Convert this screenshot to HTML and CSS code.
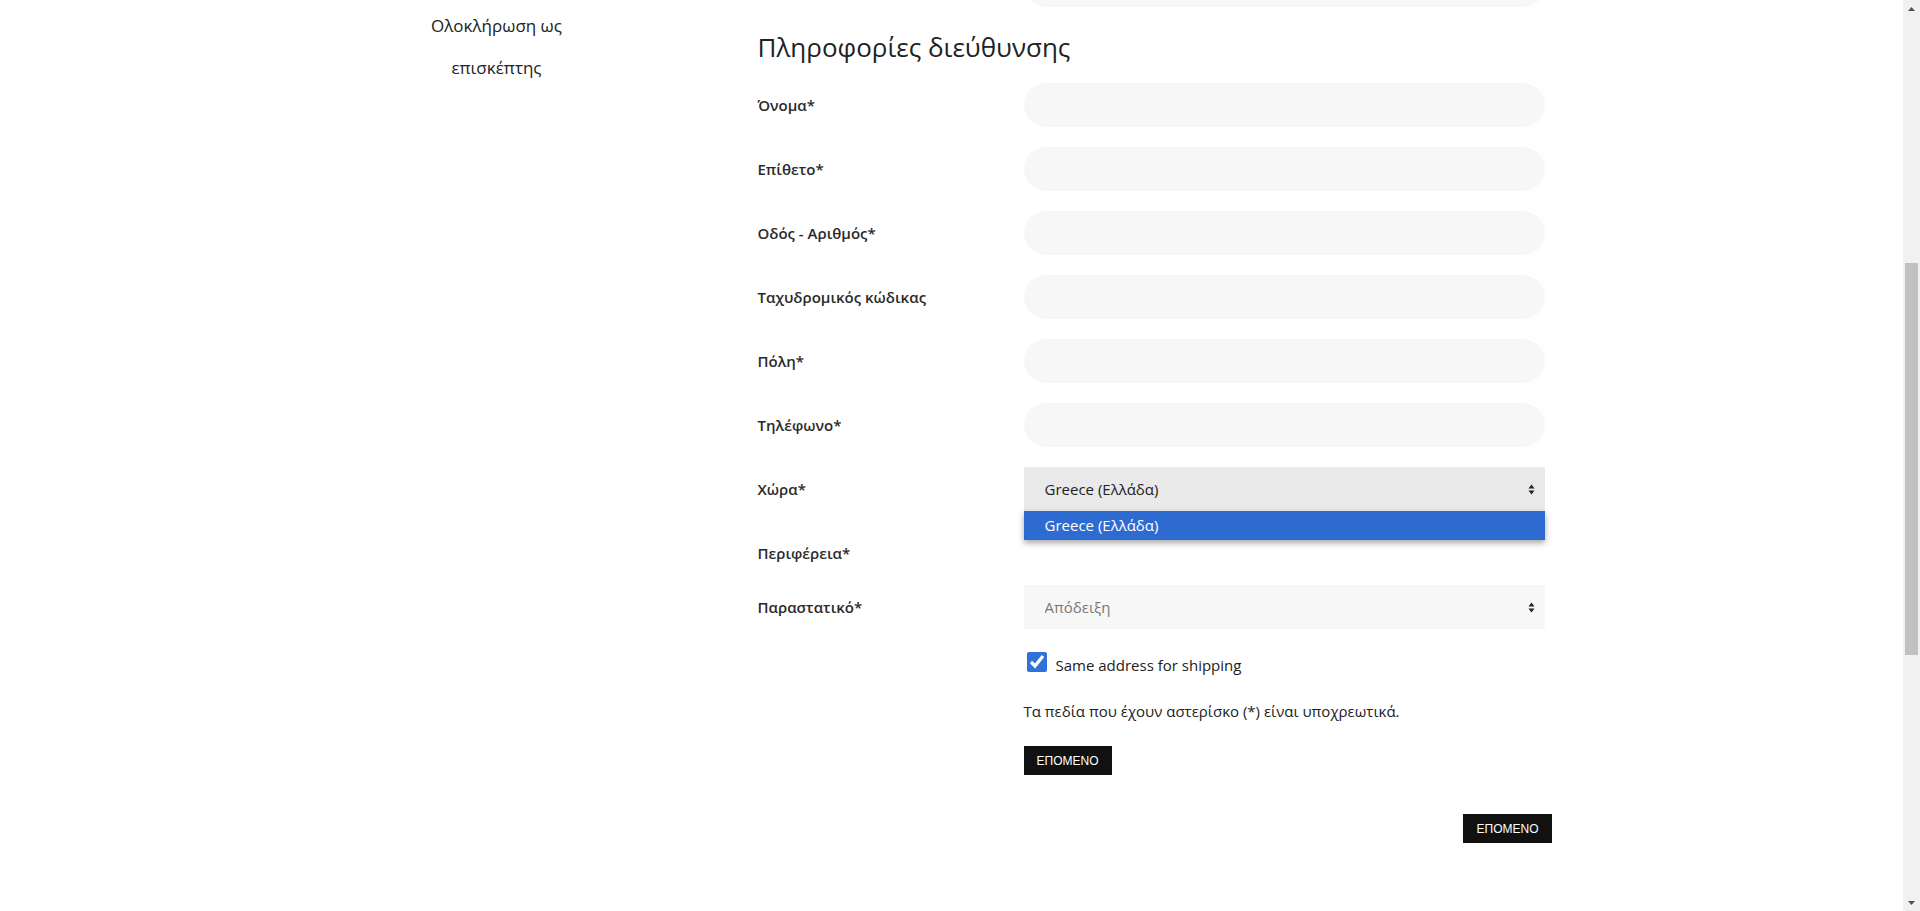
FILE: index.html
```html
<!DOCTYPE html>
<html lang="el">
<head>
    <meta charset="UTF-8">
    <meta name="viewport" content="width=device-width, initial-scale=1.0">
    <title>Ολοκλήρωση παραγγελίας</title>
    <link rel="stylesheet" href="styles.css">
</head>
<body>
    <div class="checkout">
        <aside class="sidebar">
            <a href="#" class="side-link">Ολοκλήρωση ως επισκέπτης</a>
        </aside>

        <main class="main">
            <form id="checkoutForm">
                <!-- tail of the contact section -->
                <div class="form-row form-row-cut">
                    <span class="label-spacer"></span>
                    <div class="field"><input type="email" name="email"></div>
                </div>

                <section class="form-section">
                    <h2>Πληροφορίες διεύθυνσης</h2>
                    <div class="form-row">
                        <label for="firstName">Όνομα*</label>
                        <div class="field"><input type="text" id="firstName" name="first_name"></div>
                    </div>
                    <div class="form-row">
                        <label for="lastName">Επίθετο*</label>
                        <div class="field"><input type="text" id="lastName" name="last_name"></div>
                    </div>
                    <div class="form-row">
                        <label for="street">Οδός - Αριθμός*</label>
                        <div class="field"><input type="text" id="street" name="street"></div>
                    </div>
                    <div class="form-row">
                        <label for="postcode">Ταχυδρομικός κώδικας</label>
                        <div class="field"><input type="text" id="postcode" name="postcode"></div>
                    </div>
                    <div class="form-row">
                        <label for="city">Πόλη*</label>
                        <div class="field"><input type="text" id="city" name="city"></div>
                    </div>
                    <div class="form-row">
                        <label for="phone">Τηλέφωνο*</label>
                        <div class="field"><input type="text" id="phone" name="phone"></div>
                    </div>
                    <div class="form-row">
                        <label for="country">Χώρα*</label>
                        <div class="field">
                            <select id="country" name="country" class="is-open">
                                <option value="GR">Greece (Ελλάδα)</option>
                            </select>
                            <!-- open option list of the country select -->
                            <ul class="select-menu">
                                <li class="selected">Greece (Ελλάδα)</li>
                            </ul>
                        </div>
                    </div>
                    <div class="form-row form-row-short">
                        <label for="region">Περιφέρεια*</label>
                    </div>
                    <div class="form-row">
                        <label for="invoiceType">Παραστατικό*</label>
                        <div class="field">
                            <select id="invoiceType" name="invoice_type" class="muted">
                                <option value="receipt">Απόδειξη</option>
                                <option value="invoice">Τιμολόγιο</option>
                            </select>
                        </div>
                    </div>

                    <div class="form-extra">
                        <label class="check-row">
                            <input type="checkbox" name="same_shipping" checked>
                            <span>Same address for shipping</span>
                        </label>
                        <p class="note">Τα πεδία που έχουν αστερίσκο (*) είναι υποχρεωτικά.</p>
                        <button type="submit" class="btn">Επομενο</button>
                    </div>
                </section>
            </form>

            <div class="checkout-actions">
                <button type="button" class="btn">Επομενο</button>
            </div>
        </main>
    </div>

    <!-- window scrollbar -->
    <div class="scrollbar" aria-hidden="true">
        <span class="scroll-btn">
            <svg width="7" height="4" viewBox="0 0 7 4"><polygon points="0,4 3.5,0 7,4" fill="#505050"/></svg>
        </span>
        <span class="scroll-track"><span class="scroll-thumb"></span></span>
        <span class="scroll-btn">
            <svg width="7" height="4" viewBox="0 0 7 4"><polygon points="0,0 3.5,4 7,0" fill="#505050"/></svg>
        </span>
    </div>
</body>
</html>
```

FILE: styles.css
```css
:root {
    --text-color: #222;
    --field-bg: #f7f7f7;
    --field-open: #e9e9e9;
    --highlight: #2e6bd1;
}

* {
    box-sizing: border-box;
}

body {
    margin: 0;
    padding-right: 17px;
    font-family: 'Open Sans', 'Noto Sans', sans-serif;
    font-size: 15px;
    color: var(--text-color);
    background: #fff;
}

.checkout {
    display: flex;
    width: 1200px;
    margin: 0 auto;
    padding-bottom: 60px;
}

.sidebar {
    width: 290px;
    flex-shrink: 0;
    padding: 5px 50px 0;
    text-align: center;
}

.side-link {
    display: block;
    font-size: 17px;
    line-height: 42px;
    color: var(--text-color);
    text-decoration: none;
}

.main {
    flex: 1;
    padding-left: 116px;
}

#checkoutForm {
    width: 787px;
}

.form-section h2 {
    margin: 23px 0 19px;
    font-size: 26px;
    line-height: 34px;
    font-weight: 400;
    color: #222;
}

.form-row {
    display: flex;
    margin-bottom: 20px;
}

.form-row label,
.label-spacer {
    width: 266px;
    flex-shrink: 0;
}

.form-row label {
    padding-top: 12px;
    font-size: 15px;
    line-height: 20px;
    font-weight: 600;
    color: #2a2a2a;
}

/* only the bottom edge of this field is left on screen */
.form-row-cut {
    height: 7px;
    margin-bottom: 0;
    overflow: hidden;
    align-items: flex-end;
}

.form-row-cut .field {
    flex-shrink: 0;
}

.form-row-short {
    height: 34px;
}

.field {
    position: relative;
    flex: 1;
}

.field input,
.field select {
    display: block;
    width: 100%;
    height: 44px;
    border: none;
    outline: none;
    font-family: inherit;
    font-size: 15px;
    color: var(--text-color);
    background-color: var(--field-bg);
}

.field input {
    border-radius: 22px;
    padding: 0 22px;
}

.field select {
    appearance: none;
    border-radius: 0;
    padding: 0 30px 0 21px;
    background-image: url("data:image/svg+xml;utf8,<svg xmlns='http://www.w3.org/2000/svg' width='7' height='11'><polygon points='0.5,4.5 3.5,0.5 6.5,4.5' fill='%23222'/><polygon points='0.5,6.5 3.5,10.5 6.5,6.5' fill='%23222'/></svg>");
    background-repeat: no-repeat;
    background-position: right 10px center;
}

.field select.is-open {
    background-color: var(--field-open);
}

.field select.muted {
    color: #777;
}

.select-menu {
    position: absolute;
    top: 100%;
    left: 0;
    right: 0;
    margin: 0;
    padding: 0;
    list-style: none;
    background: #fff;
    box-shadow: 0 3px 6px rgba(0, 0, 0, 0.35);
    z-index: 5;
}

.select-menu li {
    height: 29px;
    padding: 0 21px;
    line-height: 29px;
    font-size: 15px;
}

.select-menu li.selected {
    background: var(--highlight);
    color: #fff;
}

.form-extra {
    padding-left: 266px;
}

.check-row {
    display: flex;
    align-items: flex-start;
    gap: 9px;
    margin-top: 1px;
    font-size: 15px;
}

.check-row input {
    width: 20px;
    height: 20px;
    margin: 3px 0 0 3px;
    accent-color: #2f72d9;
}

.check-row span {
    margin-top: 2px;
    line-height: 28px;
}

.note {
    margin: 22px 0 25px;
    line-height: 20px;
}

.btn {
    display: inline-block;
    height: 29px;
    padding: 0 13px;
    border: none;
    background: #111;
    color: #fff;
    font-family: 'Liberation Sans', Arial, sans-serif;
    font-size: 12px;
    text-transform: uppercase;
    cursor: pointer;
}

.checkout-actions {
    display: flex;
    justify-content: flex-end;
    margin-top: 39px;
}

/* classic window scrollbar, page scrolled to the billing step */
.scrollbar {
    position: fixed;
    top: 0;
    right: 0;
    bottom: 0;
    width: 17px;
    display: flex;
    flex-direction: column;
    background: #f1f1f1;
}

.scroll-btn {
    display: flex;
    align-items: center;
    justify-content: center;
    height: 17px;
    flex-shrink: 0;
}

.scroll-track {
    flex: 1;
    padding: 0 2px;
}

.scroll-thumb {
    display: block;
    height: 392px;
    margin-top: 246px;
    background: #c1c1c1;
}
```
